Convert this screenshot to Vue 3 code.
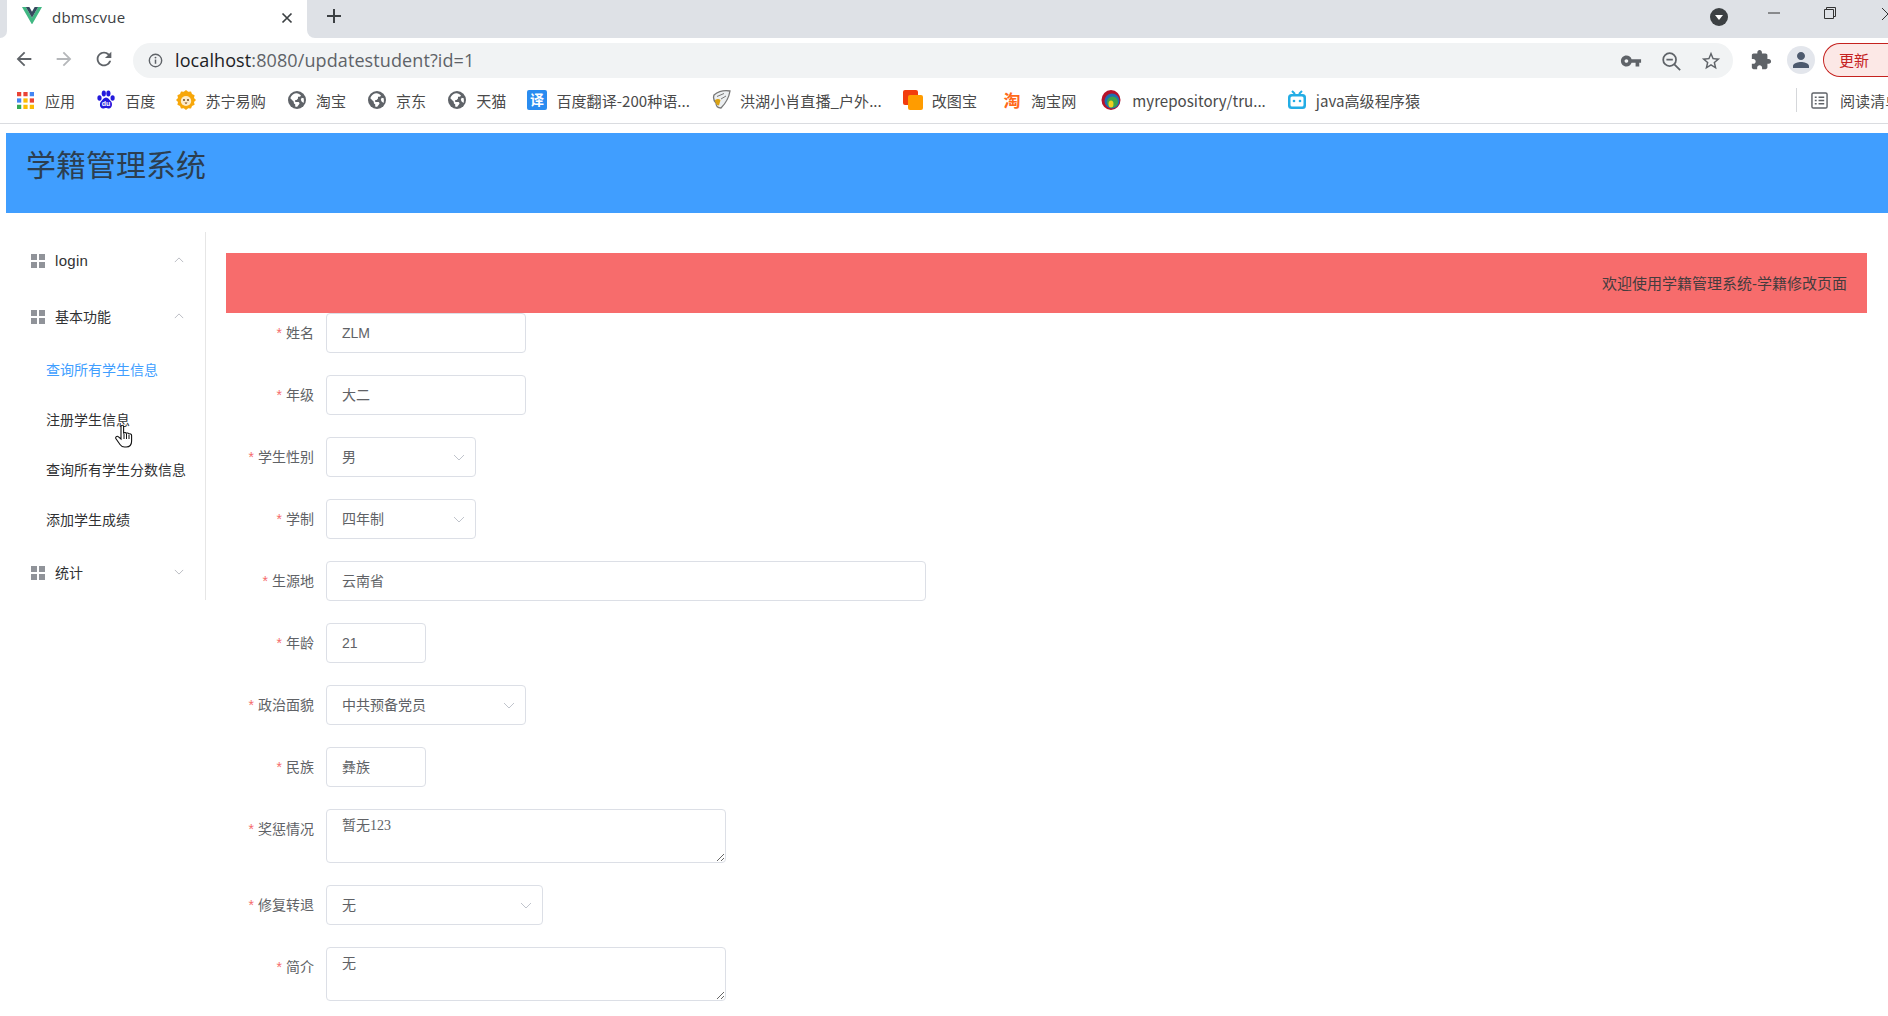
<script setup>
const bookmarks = [
  { icon: 'apps', label: '应用' },
  { icon: 'baidu', label: '百度' },
  { icon: 'suning', label: '苏宁易购' },
  { icon: 'globe', label: '淘宝' },
  { icon: 'globe', label: '京东' },
  { icon: 'globe', label: '天猫' },
  { icon: 'fanyi', label: '百度翻译-200种语...' },
  { icon: 'eagle', label: '洪湖小肖直播_户外...' },
  { icon: 'gaitu', label: '改图宝' },
  { icon: 'tao', label: '淘宝网' },
  { icon: 'repo', label: 'myrepository/tru...' },
  { icon: 'bili', label: 'java高级程序猿' }
]
const appColors = ['#ea4335','#ea4335','#4285f4','#4285f4','#fbbc04','#ea4335','#34a853','#fbbc04','#fbbc04']
const rows = [
  { label: '姓名', value: 'ZLM', type: 'input', width: 200 },
  { label: '年级', value: '大二', type: 'input', width: 200 },
  { label: '学生性别', value: '男', type: 'select', width: 150 },
  { label: '学制', value: '四年制', type: 'select', width: 150 },
  { label: '生源地', value: '云南省', type: 'input', width: 600 },
  { label: '年龄', value: '21', type: 'input', width: 100 },
  { label: '政治面貌', value: '中共预备党员', type: 'select', width: 200 },
  { label: '民族', value: '彝族', type: 'input', width: 100 },
  { label: '奖惩情况', value: '暂无123', type: 'textarea', width: 400 },
  { label: '修复转退', value: '无', type: 'select', width: 217 },
  { label: '简介', value: '无', type: 'textarea', width: 400 }
]
</script>

<template>
  <div class="screen">
    <div class="tabbar">
      <div class="strip-left"></div>
      <div class="tab">
        <svg class="vue-logo" viewBox="0 0 24 21"><path fill="#41b883" d="M0 0h4.6L12 12.8 19.4 0H24L12 21z"/><path fill="#35495e" d="M4.6 0h4.2L12 5.6 15.2 0h4.2L12 12.8z"/></svg>
        <span class="tab-title">dbmscvue</span>
        <svg class="tab-close" viewBox="0 0 12 12"><path d="M1.5 1.5l9 9M10.5 1.5l-9 9" stroke="#3c4043" stroke-width="1.7" fill="none"/></svg>
      </div>
      <div class="strip-right">
        <svg class="new-tab" viewBox="0 0 16 16"><path d="M8 1v14M1 8h14" stroke="#3c4043" stroke-width="2" fill="none"/></svg>
        <div class="strip-fill"></div>
        <div class="profile-drop"><svg viewBox="0 0 18 18"><circle cx="9" cy="9" r="9" fill="#3c4043"/><path d="M5 7h8l-4 5z" fill="#fff"/></svg></div>
        <svg class="win-btn win-min" viewBox="0 0 14 14"><path d="M1 7h12" stroke="#333" stroke-width="1" fill="none"/></svg>
        <svg class="win-btn win-max" viewBox="0 0 14 14"><path d="M1.5 3.5h9v9h-9zM3.5 3.5v-2h9v9h-2" stroke="#333" stroke-width="1" fill="none"/></svg>
        <svg class="win-close" viewBox="0 0 14 14"><path d="M1 1l12 12M13 1L1 13" stroke="#333" stroke-width="1" fill="none"/></svg>
      </div>
    </div>

    <div class="toolbar">
      <div class="nav-btns">
        <svg viewBox="0 0 24 24"><path fill="#5f6368" d="M20 11H7.83l5.59-5.59L12 4l-8 8 8 8 1.41-1.41L7.83 13H20v-2z"/></svg>
        <svg viewBox="0 0 24 24"><path fill="#b5b7ba" d="M4 11h12.17l-5.59-5.59L12 4l8 8-8 8-1.41-1.41L16.17 13H4v-2z"/></svg>
        <svg viewBox="0 0 24 24"><path fill="#5f6368" d="M17.65 6.35A7.958 7.958 0 0 0 12 4c-4.42 0-7.99 3.58-7.99 8s3.57 8 7.99 8c3.73 0 6.84-2.55 7.73-6h-2.08A5.99 5.99 0 0 1 12 18c-3.31 0-6-2.69-6-6s2.69-6 6-6c1.66 0 3.14.69 4.22 1.78L13 11h7V4l-2.35 2.35z"/></svg>
      </div>
      <div class="omnibox">
        <svg class="info" viewBox="0 0 16 16"><circle cx="8" cy="8" r="6.600" stroke="#5f6368" stroke-width="1.500" fill="none"/><path d="M8 7v4.500" stroke="#5f6368" stroke-width="1.600"/><circle cx="8" cy="4.900" r="1" fill="#5f6368"/></svg>
        <div class="url"><span class="host">localhost</span>:8080/updatestudent?id=1</div>
        <div class="omni-icons">
          <svg viewBox="0 0 24 24"><path fill="#5f6368" d="M12.65 10A5.99 5.99 0 0 0 7 6c-3.31 0-6 2.69-6 6s2.69 6 6 6a5.99 5.99 0 0 0 5.65-4H17v4h4v-4h2v-4H12.65zM7 14c-1.1 0-2-.9-2-2s.9-2 2-2 2 .9 2 2-.9 2-2 2z"/></svg>
          <svg viewBox="0 0 24 24"><circle cx="10.500" cy="10.500" r="7" stroke="#5f6368" stroke-width="1.900" fill="none"/><path d="M15.600 15.600L22 22M7 10.500h7" stroke="#5f6368" stroke-width="1.900" fill="none"/></svg>
          <svg viewBox="0 0 24 24"><path fill="#5f6368" d="M22 9.24l-7.19-.62L12 2 9.19 8.63 2 9.24l5.46 4.73L5.82 21 12 17.27 18.18 21l-1.63-7.03L22 9.24zM12 15.4l-3.76 2.27 1-4.28-3.32-2.88 4.38-.38L12 6.1l1.71 4.04 4.38.38-3.32 2.88 1 4.28L12 15.4z"/></svg>
        </div>
      </div>
      <svg class="ext" viewBox="0 0 24 24"><path fill="#5f6368" d="M20.5 11H19V7c0-1.1-.9-2-2-2h-4V3.5C13 2.12 11.88 1 10.5 1S8 2.12 8 3.5V5H4c-1.1 0-1.99.9-1.99 2v3.8H3.5c1.49 0 2.7 1.21 2.7 2.7s-1.21 2.7-2.7 2.7H2V20c0 1.1.9 2 2 2h3.8v-1.5c0-1.49 1.21-2.7 2.7-2.7 1.49 0 2.7 1.21 2.7 2.7V22H17c1.1 0 2-.9 2-2v-4h1.5c1.38 0 2.5-1.12 2.5-2.5S21.88 11 20.5 11z"/></svg>
      <div class="avatar"><svg viewBox="0 0 24 24"><path fill="#4d5a6e" d="M12 12c2.21 0 4-1.79 4-4s-1.79-4-4-4-4 1.79-4 4 1.79 4 4 4zm0 2c-2.67 0-8 1.34-8 4v2h16v-2c0-2.66-5.33-4-8-4z"/></svg></div>
      <div class="update">更新</div>
    </div>

    <div class="bookmarks">
      <div v-for="b in bookmarks" :key="b.label" class="bm" :class="'bm-' + b.icon">
        <svg v-if="b.icon === 'apps'" class="bm-ic" viewBox="0 0 16 16"><rect v-for="(c, i) in appColors" :key="i" :x="(i % 3) * 6" :y="Math.floor(i / 3) * 6" width="4" height="4" :fill="c"/></svg>
        <svg v-else-if="b.icon === 'baidu'" class="bm-ic" viewBox="0 0 20 20"><g fill="#2319dc"><ellipse cx="3.500" cy="8" rx="2.100" ry="2.800"/><ellipse cx="7.800" cy="3.500" rx="2.100" ry="2.900"/><ellipse cx="12.400" cy="3.500" rx="2.100" ry="2.900"/><ellipse cx="16.600" cy="8" rx="2.100" ry="2.800"/><path d="M10 7.500c2.300 0 3.300 2.400 4.800 3.700 1.900 1.700 1.700 7-1.900 7.300-1.200 0-1.900-.5-2.900-.5s-1.800.5-3 .5c-3.500-.2-3.800-5.500-1.700-7.300C6.800 9.900 7.800 7.500 10 7.500z"/></g><text x="10" y="16" text-anchor="middle" class="du-t">du</text></svg>
        <svg v-else-if="b.icon === 'suning'" class="bm-ic" viewBox="0 0 20 20"><path fill="#f7a70a" d="M10 0l2.200 1.800 2.800-.4 1 2.700 2.600 1.200-.6 2.800L20 10l-2 1.900.6 2.800-2.600 1.200-1 2.700-2.800-.4L10 20l-2.200-1.800-2.800.4-1-2.700-2.600-1.200.6-2.800L0 10l2-1.900-.6-2.800L4 4.100l1-2.700 2.800.4z"/><ellipse cx="10" cy="11" rx="5.200" ry="5" fill="#fdeccb"/><circle cx="8" cy="10" r=".9" fill="#5b3a10"/><circle cx="12" cy="10" r=".9" fill="#5b3a10"/><path d="M8.500 12.500h3L10 14.200z" fill="#8a4b12"/></svg>
        <svg v-else-if="b.icon === 'globe'" class="bm-ic" viewBox="0 0 20 20"><circle cx="10" cy="10" r="9" fill="#5f6368"/><path fill="#fff" d="M9 3.200C6.200 3.600 4 5.600 3.300 8.200l3.500 3.600v1c0 .8.700 1.400 1.400 1.400v2.300c-.1 0 1 .4 1.800.4l2.500-3.200c0-.9-.6-1.600-1.400-1.600H8.200V9.900h1.400l1.400-1.400V6.700h1.600c.8 0 1.300-.6 1.300-1.200C13 4.200 11 3 9 3.200zM16.600 12.900l-2-1.300-.8-2.200.9-1.600 2 .4c.3 1.600.3 3.200-.1 4.700z"/></svg>
        <svg v-else-if="b.icon === 'fanyi'" class="bm-ic" viewBox="0 0 20 20"><rect width="20" height="20" rx="2" fill="#2a8cf0"/><text x="10" y="15" text-anchor="middle" class="fanyi-t">译</text></svg>
        <svg v-else-if="b.icon === 'eagle'" class="bm-ic" viewBox="0 0 20 20"><path d="M3 5c5-4 10-5 16-4-1 6-4 12-9 17-3 0-5-2-5-5-2-2-3-5-2-8z" fill="#eceff1" stroke="#777" stroke-width="1.300"/><path d="M4 10c2-1.500 4-1.500 5.500 0L8 15.500c-2.500 0-4-3-4-5.500z" fill="#d9a214"/><path d="M6 6.500l7-3M10 9l5-3" stroke="#777" stroke-width="1"/></svg>
        <svg v-else-if="b.icon === 'gaitu'" class="bm-ic" viewBox="0 0 20 20"><rect x="0" y="0" width="15" height="15" rx="2" fill="#f23c0d"/><rect x="5" y="5" width="15" height="15" rx="2" fill="#ff9c00"/></svg>
        <span v-else-if="b.icon === 'tao'" class="bm-ic tao-ic">淘</span>
        <svg v-else-if="b.icon === 'repo'" class="bm-ic" viewBox="0 0 20 20"><ellipse cx="10" cy="10" rx="9.500" ry="10" fill="#b5122b"/><ellipse cx="11" cy="11" rx="7.500" ry="7.500" fill="#1f6fb2"/><ellipse cx="11.500" cy="12" rx="5.500" ry="5.500" fill="#3ea34a"/><ellipse cx="10" cy="14" rx="2.500" ry="3.500" fill="#f0d020"/></svg>
        <svg v-else-if="b.icon === 'bili'" class="bm-ic" viewBox="0 0 20 20"><path d="M5 1l3 3M15 1l-3 3" stroke="#23ade5" stroke-width="2" fill="none"/><rect x="1" y="4" width="18" height="15" rx="3.500" fill="#23ade5"/><rect x="3.500" y="6.500" width="13" height="10" rx="1.500" fill="#fff"/><circle cx="7" cy="11" r="1.300" fill="#23ade5"/><circle cx="13" cy="11" r="1.300" fill="#23ade5"/></svg>
        <span class="bm-label">{{ b.label }}</span>
      </div>
      <div class="bm-spacer"></div>
      <div class="reading">
        <svg viewBox="0 0 18 18"><rect x="1" y="1" width="16" height="16" rx="1.500" stroke="#5f6368" stroke-width="1.500" fill="none"/><path d="M4 5.500h2M8 5.500h6M4 9h2M8 9h6M4 12.500h2M8 12.500h6" stroke="#5f6368" stroke-width="1.500"/></svg>
        <span>阅读清单</span>
      </div>
    </div>

    <div class="page">
      <header class="app-header">学籍管理系统</header>
      <div class="app-body">
        <aside class="side">
          <div class="sub-title">
            <span class="grid-ic"><i></i><i></i><i></i><i></i></span>
            <span class="sub-text latin">login</span>
            <svg class="chev" viewBox="0 0 12 7"><path d="M1 6l5-5 5 5" stroke="#aeb1b8" fill="none"/></svg>
          </div>
          <div class="sub-title">
            <span class="grid-ic"><i></i><i></i><i></i><i></i></span>
            <span class="sub-text">基本功能</span>
            <svg class="chev" viewBox="0 0 12 7"><path d="M1 6l5-5 5 5" stroke="#aeb1b8" fill="none"/></svg>
          </div>
          <div class="item active">查询所有学生信息</div>
          <div class="item">注册学生信息</div>
          <div class="item">查询所有学生分数信息</div>
          <div class="item">添加学生成绩</div>
          <div class="sub-title">
            <span class="grid-ic"><i></i><i></i><i></i><i></i></span>
            <span class="sub-text">统计</span>
            <svg class="chev" viewBox="0 0 12 7"><path d="M1 1l5 5 5-5" stroke="#aeb1b8" fill="none"/></svg>
          </div>
          <svg class="cursor" viewBox="0 0 18 24"><path d="M6 11V2.500C6 .8 8.600.8 8.600 2.500V9c.8-.6 2.200-.6 2.800.3.800-.5 2.100-.4 2.600.6 1-.4 2.600 0 2.600 1.700v5.400c0 3.400-2 6-5.400 6H9.500c-2.200 0-3.400-.9-4.500-2.500L1 14.800c-1-1.800 1-3.300 2.500-2L6 15z" fill="#fff" stroke="#111" stroke-width="1.100"/><path d="M9 10v5M11.500 10v5M14 11v4" stroke="#111" stroke-width="1"/></svg>
        </aside>
        <main class="main">
          <div class="banner">欢迎使用学籍管理系统-学籍修改页面</div>
          <form class="form">
            <div v-for="r in rows" :key="r.label" class="row" :class="{ 'row-area': r.type === 'textarea' }">
              <label class="lbl"><span class="star">*</span>{{ r.label }}</label>
              <textarea v-if="r.type === 'textarea'" class="area" :style="{ width: r.width + 'px' }" readonly v-text="r.value"></textarea>
              <div v-else class="field" :style="{ width: r.width + 'px' }">
                <span>{{ r.value }}</span>
                <svg v-if="r.type === 'select'" class="caret" viewBox="0 0 12 7"><path d="M1 1l5 5 5-5" stroke="#c0c4cc" fill="none"/></svg>
              </div>
            </div>
          </form>
        </main>
      </div>
    </div>
  </div>
</template>

<style>
html, body { margin: 0; padding: 0; background: #fff; overflow: hidden; }
</style>

<style scoped>
.screen {
  width: 1888px;
  height: 1016px;
  overflow: hidden;
  background: #fff;
  font-family: "Liberation Sans", "Noto Sans CJK SC", sans-serif;
}
.tabbar { display: flex; height: 38px; background: #fff; }
.strip-left { width: 7px; background: #dee1e6; border-bottom-right-radius: 8px; }
.tab {
  width: 300px; display: flex; align-items: center; box-sizing: border-box;
  padding-left: 15px; position: relative;
}
.vue-logo { width: 20px; height: 17.500px; margin-top: -7px; }
.tab-title { margin-left: 10px; margin-top: -4px; font: 15px "Open Sans", "Liberation Sans", sans-serif; letter-spacing: .2px; color: #3c4043; }
.tab-close { width: 12px; height: 12px; margin-left: auto; margin-right: 14px; margin-top: -2px; }
.strip-right {
  flex: 1; display: flex; align-items: center; background: #dee1e6; border-bottom-left-radius: 8px;
  padding-left: 19px;
}
.new-tab { width: 16px; height: 16px; margin-top: -6px; }
.strip-fill { flex: 1; }
.profile-drop { width: 18px; height: 18px; margin-top: -4px; margin-right: 39px; flex: none; }
.profile-drop svg { display: block; width: 18px; height: 18px; }
.win-btn { width: 14px; height: 14px; margin-top: -12px; flex: none; }
.win-min { margin-right: 42px; }
.win-max { margin-right: 44px; }
.win-close { width: 14px; height: 14px; margin-top: -10px; margin-right: -7px; flex: none; }

.toolbar { height: 40px; display: flex; align-items: flex-start; padding-top: 5px; box-sizing: border-box; overflow: hidden; }
.nav-btns { width: 133px; flex: none; display: flex; padding-left: 13px; box-sizing: border-box; gap: 18px; padding-top: 5px; }
.nav-btns svg { width: 22px; height: 22px; flex: none; }
.omnibox {
  width: 1600px; flex: none; height: 35px; background: #f1f3f4; border-radius: 18px; display: flex; align-items: center;
  box-sizing: border-box; padding-left: 15px;
}
.info { width: 15px; height: 15px; flex: none; }
.url { margin-left: 12px; font: 18px/35px "Open Sans", "Liberation Sans", sans-serif; letter-spacing: .1px; color: #5f6368; }
.host { color: #202124; }
.omni-icons { margin-left: auto; display: flex; gap: 18px; padding-right: 11px; }
.omni-icons svg { width: 22px; height: 22px; }
.ext { width: 22px; height: 22px; margin-left: 17px; margin-top: 6px; flex: none; }
.avatar { width: 28px; height: 28px; border-radius: 50%; background: #e3e6ec; margin-left: 15px; margin-top: 3px; display: flex; align-items: center; justify-content: center; flex: none; }
.avatar svg { width: 24px; height: 24px; }
.update {
  width: 90px; flex: none; height: 34px; margin-left: 8px; box-sizing: border-box; border: 1px solid #c5221f; border-radius: 17px 0 0 17px;
  border-right: none; background: #fce8e6; color: #c5221f; font: 15px/32px "Noto Sans CJK SC", sans-serif; padding-left: 15px;
}

.bookmarks {
  height: 46px; box-sizing: border-box; border-bottom: 1px solid #dadce0; display: flex; align-items: center;
  padding-left: 17px; gap: 21px; overflow: hidden; padding-bottom: 1px;
  font: 15.100px "Noto Sans CJK SC", sans-serif; color: #4a4a4a;
}
.bm { display: flex; align-items: center; gap: 9px; flex: none; }
.bm-ic { width: 20px; height: 20px; flex: none; }
.bm-apps .bm-ic { width: 17px; height: 17px; margin-right: 2px; }
.bm-tao { margin-left: 4px; }
.bm-repo { margin-left: 4px; gap: 11px; }
.du-t { font: bold 7px "Liberation Sans", sans-serif; fill: #fff; }
.fanyi-t { font: bold 14px "Noto Sans CJK SC", sans-serif; fill: #fff; }
.tao-ic { color: #ff6a1a; font: bold 17px/20px "Noto Sans CJK SC", sans-serif; text-align: center; }
.bm-label { white-space: nowrap; }
.bm-spacer { flex: 1; }
.reading {
  flex: none; width: 92px; box-sizing: border-box; margin-left: -21px; margin-right: 0; display: flex; align-items: center; gap: 12px;
  border-left: 1px solid #d5d7da; padding-left: 14px; height: 24px; white-space: nowrap;
}
.reading svg { width: 17px; height: 17px; flex: none; }

.page { padding: 9px 0 0 6px; }
.app-header {
  height: 80px; background: #409eff; color: #2c3e50; font-size: 30px; line-height: 61px;
  padding-left: 20px; font-family: "Noto Sans CJK SC", sans-serif; font-weight: 400;
}
.app-body { display: flex; padding-top: 19px; align-items: flex-start; }
.side {
  width: 200px; box-sizing: border-box; border-right: 1px solid #e6e6e6; position: relative; flex: none;
  color: #303133; font-size: 14px;
}
.sub-title { height: 56px; display: flex; align-items: center; padding-left: 25px; padding-right: 21px; }
.grid-ic { width: 14px; height: 14px; display: grid; grid-template-columns: 6px 6px; grid-auto-rows: 6px; gap: 2px; margin-right: 10px; margin-top: 2px; }
.grid-ic i { background: #909399; display: block; }
.sub-text { flex: 1; }
.latin { font-size: 15px; letter-spacing: .3px; }
.chev { width: 10px; height: 6px; }
.item { height: 50px; line-height: 52px; padding-left: 40px; white-space: nowrap; }
.item.active { color: #409eff; }
.cursor { position: absolute; left: 109px; top: 192px; width: 18px; height: 24px; }

.main { flex: 1; padding: 21px 21px 0 20px; min-width: 0; }
.banner {
  height: 60px; line-height: 61px; background: #f76c6c; text-align: right; padding-right: 20px;
  color: #453c3e; font-size: 15px;
}
.row { display: flex; height: 40px; margin-bottom: 22px; }
.row-area { height: 54px; margin-bottom: 22px; }
.lbl {
  width: 100px; box-sizing: border-box; padding-right: 12px; text-align: right; color: #606266; font-size: 14px; line-height: 40px; flex: none;
}
.star { color: #f56c6c; margin-right: 4px; }
.field {
  box-sizing: border-box; height: 40px; border: 1px solid #dcdfe6; border-radius: 4px; padding: 0 15px;
  color: #606266; font-size: 14px; line-height: 38px; display: flex; justify-content: space-between; align-items: center;
}
.caret { width: 12px; height: 7px; margin-right: -5px; }
.area {
  box-sizing: border-box; height: 54px; border: 1px solid #dcdfe6; border-radius: 4px; padding: 5px 15px; margin: 0;
  color: #606266; font: 14px/1.5 "Liberation Serif", "Noto Sans CJK SC", serif; outline: none; display: block; background: #fff;
}
</style>
